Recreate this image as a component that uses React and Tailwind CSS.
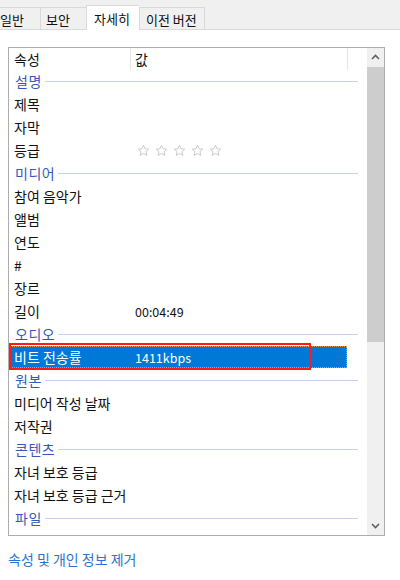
import React from "react";
import clsx from "clsx";

const tabs = [
  { label: "일반", cls: "ml-[-6px] w-[46px] pl-[5px]" },
  { label: "보안", cls: "w-[46px] pl-[5px]" },
  { label: "자세히", cls: "w-[53px] pl-[7px]", active: true },
  { label: "이전 버전", cls: "w-[66px] pl-[6px] border-r" },
];

// g = 그룹 머리, 나머지는 일반 행
const rows = [
  { g: "설명" },
  { name: "제목" },
  { name: "자막" },
  { name: "등급", stars: true },
  { g: "미디어" },
  { name: "참여 음악가" },
  { name: "앨범" },
  { name: "연도" },
  { name: "#" },
  { name: "장르" },
  { name: "길이", value: "00:04:49" },
  { g: "오디오" },
  { name: "비트 전송률", value: "1411kbps", selected: true },
  { g: "원본" },
  { name: "미디어 작성 날짜" },
  { name: "저작권" },
  { g: "콘텐츠" },
  { name: "자녀 보호 등급" },
  { name: "자녀 보호 등급 근거" },
  { g: "파일" },
];

const Star = () => (
  <svg width="13" height="13" viewBox="0 0 24 24">
    <path
      d="M12 2.5l2.9 6.3 6.8.7-5.1 4.6 1.5 6.8L12 17.4l-6.1 3.5 1.5-6.8-5.1-4.6 6.8-.7z"
      fill="#fff"
      stroke="#c2c2c2"
      strokeWidth="1.6"
      strokeLinejoin="round"
    />
  </svg>
);

const Chevron = ({ down }) => (
  <svg width="9" height="6" viewBox="0 0 9 6">
    <path
      d={down ? "M1 1l3.5 3.5L8 1" : "M1 5l3.5-3.5L8 5"}
      fill="none"
      stroke="#606060"
      strokeWidth="1.6"
    />
  </svg>
);

const GroupRow = ({ label }) => (
  <div className="flex h-[23px] items-center pl-[6px] text-[#3558b8]">
    <span className="tracking-[0.5px]">{label}</span>
    <div className="ml-[3px] mr-[9px] h-px flex-1 bg-[#c3d1ec]" />
  </div>
);

const ItemRow = ({ name, value, stars, selected }) => (
  <div className="h-[23px]">
    <div
      className={clsx(
        "ml-px flex h-[22px] w-[337px] items-center border",
        selected
          ? "border-dotted border-[#d49a58] bg-[#0078d7] text-white"
          : "border-transparent text-[#111]"
      )}
    >
      <span className="w-[124px] shrink-0 whitespace-nowrap pl-[3px]">{name}</span>
      {stars ? (
        <span className="flex gap-[5px] pl-[2px]">
          <Star />
          <Star />
          <Star />
          <Star />
          <Star />
        </span>
      ) : (
        <span className="text-[12.5px]">{value}</span>
      )}
    </div>
  </div>
);

export default function App() {
  return (
    <div
      className="relative h-[580px] w-[400px] overflow-hidden bg-white text-[14px] leading-[17px] text-[#111]"
      style={{ fontFamily: '"Noto Sans CJK KR", "Noto Sans", sans-serif' }}
    >
      {/* 탭 */}
      <div className="flex h-[30px] items-end border-b border-[#d9d9d9] bg-[#f0f0f0] text-[13px]">
        {tabs.map((t) => (
          <div
            key={t.label}
            className={clsx(
              "flex shrink-0 items-center whitespace-nowrap border-l border-t border-[#d9d9d9]",
              t.cls,
              t.active ? "-mb-px h-[25px] bg-white" : "h-[22px] pt-[2px]"
            )}
          >
            {t.label}
          </div>
        ))}
      </div>

      {/* 속성 목록 */}
      <div className="ml-[8px] mt-[17px] flex h-[489px] w-[377px] border border-[#adadad]">
        <div className="flex-1">
          <div className="flex h-[22px] items-center">
            <div className="flex h-full w-[122px] items-center border-r border-[#e5e5e5] pl-[5px]">속성</div>
            <div className="flex h-full w-[217px] items-center border-r border-[#e5e5e5] pl-[4px]">값</div>
          </div>
          {rows.map((r, i) =>
            r.g ? <GroupRow key={i} label={r.g} /> : <ItemRow key={i} {...r} />
          )}
        </div>
        <div className="flex w-[17px] flex-col bg-[#f0f0f0]">
          <div className="flex h-[18px] items-center justify-center">
            <Chevron />
          </div>
          <div className="mt-px h-[275px] bg-[#cdcdcd]" />
          <div className="flex-1" />
          <div className="flex h-[18px] items-center justify-center">
            <Chevron down />
          </div>
        </div>
      </div>

      {/* 강조 표시 */}
      <div className="absolute left-[9px] top-[343px] h-[27px] w-[302px] border-2 border-[#ff1a1a]" />

      <div className="ml-[8px] mt-[15px] text-[14px] text-[#2a74d0]">속성 및 개인 정보 제거</div>
    </div>
  );
}
